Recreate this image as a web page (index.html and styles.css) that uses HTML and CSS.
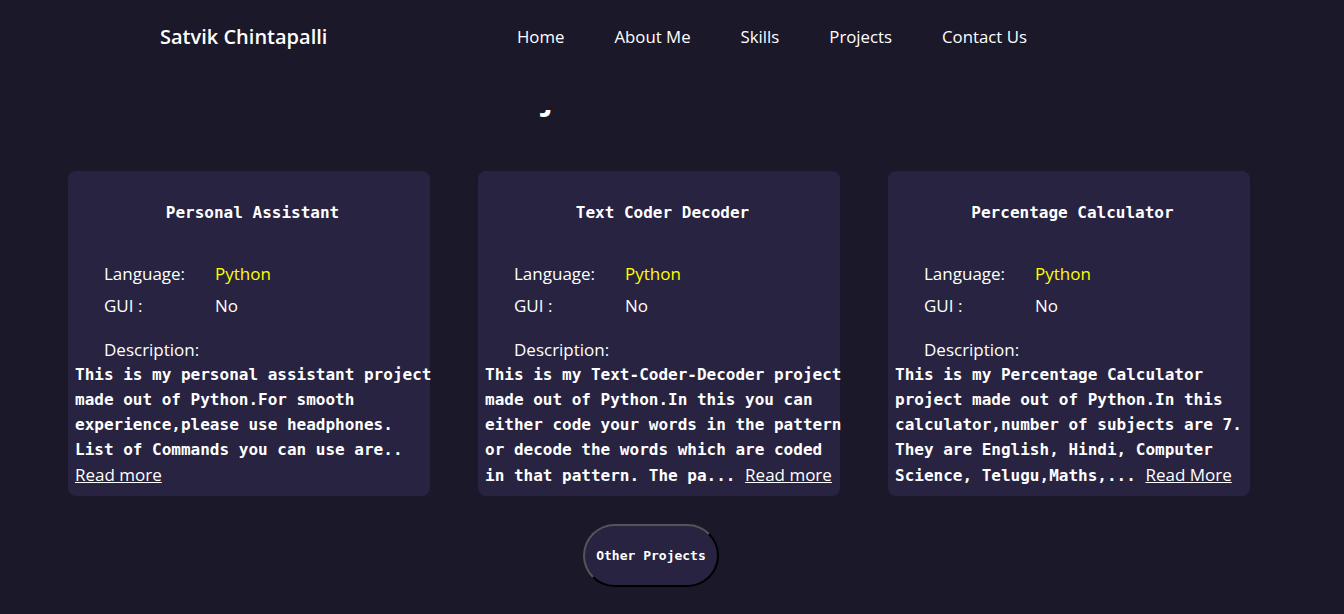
FILE: index.html
```html
<!DOCTYPE html>
<html lang="en">
<head>
<meta charset="utf-8">
<title>Satvik Chintapalli - Projects</title>
<link rel="stylesheet" href="styles.css">
</head>
<body>
<header class="site-header">
  <div class="header-row">
    <div class="brand">Satvik Chintapalli</div>
    <nav class="nav">
      <a href="#" class="nav-link">Home</a>
      <a href="#" class="nav-link">About Me</a>
      <a href="#" class="nav-link">Skills</a>
      <a href="#" class="nav-link">Projects</a>
      <a href="#" class="nav-link">Contact Us</a>
    </nav>
  </div>
</header>
<main class="main">
  <h2 class="section-title">Projects</h2>
  <div class="cards">
    <div class="card">
      <h3 class="card-title">Personal Assistant</h3>
      <div class="info-row"><span class="info-label">Language:</span><span class="info-value lang">Python</span></div>
      <div class="info-row"><span class="info-label">GUI :</span><span class="info-value">No</span></div>
      <div class="desc-label">Description:</div>
      <p class="desc">This is my personal assistant project made out of Python.For smooth experience,please use headphones. List of Commands you can use are.. <a href="#" class="read-more">Read more</a></p>
    </div>
    <div class="card">
      <h3 class="card-title">Text Coder Decoder</h3>
      <div class="info-row"><span class="info-label">Language:</span><span class="info-value lang">Python</span></div>
      <div class="info-row"><span class="info-label">GUI :</span><span class="info-value">No</span></div>
      <div class="desc-label">Description:</div>
      <p class="desc">This is my Text-Coder-Decoder project made out of Python.In this you can either code your words in the pattern or decode the words which are coded in that pattern. The pa... <a href="#" class="read-more">Read more</a></p>
    </div>
    <div class="card">
      <h3 class="card-title">Percentage Calculator</h3>
      <div class="info-row"><span class="info-label">Language:</span><span class="info-value lang">Python</span></div>
      <div class="info-row"><span class="info-label">GUI :</span><span class="info-value">No</span></div>
      <div class="desc-label">Description:</div>
      <p class="desc">This is my Percentage Calculator project made out of Python.In this calculator,number of subjects are 7. They are English, Hindi, Computer Science, Telugu,Maths,... <a href="#" class="read-more">Read More</a></p>
    </div>
  </div>
  <div class="button-row">
    <a href="#" class="other-btn">Other Projects</a>
  </div>
</main>
</body>
</html>
```
FILE: styles.css
```css
* { box-sizing: border-box; }
html, body { margin: 0; padding: 0; }
body {
  background: #1b1829;
  color: #ffffff;
  font-family: "Open Sans", "Noto Sans", sans-serif;
  height: 614px;
  overflow: hidden;
}
.site-header {
  position: fixed;
  top: 0; left: 0; right: 0;
  height: 110px;
  background: #1b1829;
  z-index: 10;
}
.header-row {
  height: 72px;
  display: flex;
  align-items: center;
  padding-left: 160px;
}
.brand {
  font-size: 20px;
  font-weight: 600;
  width: 357px;
}
.nav { display: flex; gap: 50px; }
.nav-link {
  color: #ffffff;
  text-decoration: none;
  font-size: 16.8px;
}
.main { padding-top: 68px; }
.section-title {
  margin: 0 0 55px;
  font-size: 40px;
  line-height: 48px;
  font-weight: 600;
  text-align: center;
  padding-right: 236px;
}
.cards {
  display: flex;
  gap: 48px;
  padding-left: 68px;
}
.card {
  width: 362px;
  background: #272340;
  border-radius: 8px;
  padding: 29px 0 8px 7px;
}
.card-title {
  margin: 0 0 32px;
  font-family: "DejaVu Sans Mono", monospace;
  font-size: 16px;
  font-weight: bold;
  line-height: 26px;
  text-align: center;
}
.info-row {
  display: flex;
  padding-left: 29px;
  line-height: 32px;
  font-size: 17px;
}
.info-label { width: 111px; }
.lang { color: #ffff00; }
.desc-label {
  padding-left: 29px;
  margin-top: 15px;
  line-height: 25px;
  font-size: 17px;
}
.desc {
  margin: 0 -6px 0 0;
  font-family: "DejaVu Sans Mono", monospace;
  font-size: 16px;
  font-weight: bold;
  line-height: 25px;
}
.read-more {
  color: #ffffff;
  font-family: "Open Sans", "Noto Sans", sans-serif;
  font-size: 17px;
  font-weight: normal;
  line-height: 25px;
  text-decoration: underline;
}
.button-row {
  display: flex;
  justify-content: center;
  padding-left: 68px;
  width: 1250px;
  margin-top: 28px;
  padding-right: 16px;
}
.other-btn {
  display: flex;
  align-items: center;
  justify-content: center;
  width: 136px;
  height: 63px;
  border-radius: 32px;
  background: #272340;
  border: 2px solid;
  border-color: #555555 #000000 #000000 #555555;
  color: #ffffff;
  text-decoration: none;
  font-family: "DejaVu Sans Mono", monospace;
  font-weight: bold;
  font-size: 13px;
}
```
